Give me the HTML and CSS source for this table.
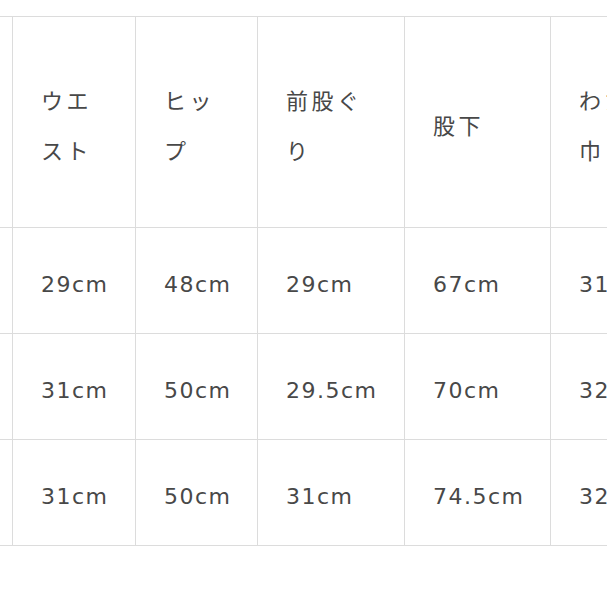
FILE: index.html
```html
<!DOCTYPE html>
<html lang="ja">
<head>
<meta charset="utf-8">
<link rel="stylesheet" href="styles.css">
</head>
<body>
<div class="viewport">
  <table class="size-table">
    <colgroup>
      <col class="c-size">
      <col class="c1">
      <col class="c2">
      <col class="c3">
      <col class="c4">
      <col class="c5">
    </colgroup>
    <thead>
      <tr class="head-row">
        <th>サイズ</th>
        <th>ウエスト</th>
        <th>ヒップ</th>
        <th>前股ぐり</th>
        <th>股下</th>
        <th>わたり巾</th>
      </tr>
    </thead>
    <tbody>
      <tr>
        <td>S</td>
        <td>29cm</td>
        <td>48cm</td>
        <td>29cm</td>
        <td>67cm</td>
        <td>31cm</td>
      </tr>
      <tr>
        <td>M</td>
        <td>31cm</td>
        <td>50cm</td>
        <td>29.5cm</td>
        <td>70cm</td>
        <td>32cm</td>
      </tr>
      <tr>
        <td>L</td>
        <td>31cm</td>
        <td>50cm</td>
        <td>31cm</td>
        <td>74.5cm</td>
        <td>32cm</td>
      </tr>
    </tbody>
  </table>
</div>
</body>
</html>
```

FILE: styles.css
```css
html, body {
  margin: 0;
  padding: 0;
  background: #ffffff;
  overflow: hidden;
}

.viewport {
  width: 607px;
  height: 607px;
  overflow: hidden;
  padding-top: 16px;
  box-sizing: border-box;
}

.size-table {
  border-collapse: collapse;
  table-layout: fixed;
  width: 784px;
  margin-left: -88px;
  line-height: 50px;
  color: #484848;
}

.c-size { width: 100px; }
.c1 { width: 123px; }
.c2 { width: 122px; }
.c3 { width: 147px; }
.c4 { width: 146px; }
.c5 { width: 146px; }

.size-table th,
.size-table td {
  border: 1px solid #dcdcdc;
  text-align: left;
  vertical-align: middle;
  font-weight: 400;
}

.size-table th {
  height: 155px;
  padding: 29px 28px 26px;
  font-family: "Noto Sans CJK JP", "Noto Sans", sans-serif;
  font-size: 22px;
  letter-spacing: 3.5px;
}

.size-table td {
  padding: 32px 28px 23px;
  font-family: "DejaVu Sans", "Noto Sans CJK JP", sans-serif;
  font-size: 22px;
  letter-spacing: 1.5px;
}
```
